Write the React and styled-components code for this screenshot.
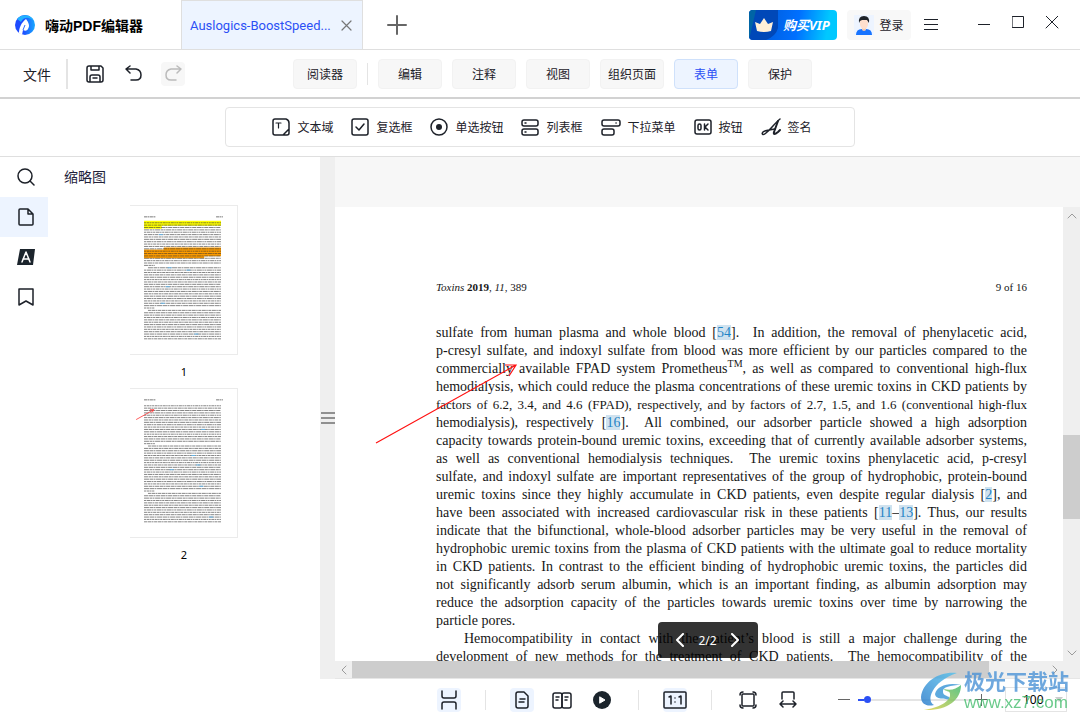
import React, { useState } from 'react'
import styled, { createGlobalStyle, css } from 'styled-components'

const GlobalStyle = createGlobalStyle`
  * {
    box-sizing: border-box;
  }
  body {
    margin: 0;
    background: #fff;
    color: #1d2129;
    font-family: 'Noto Sans', 'Noto Sans CJK SC', sans-serif;
    font-size: 12px;
  }
  button,
  input,
  select {
    font: inherit;
    color: inherit;
  }
  svg {
    display: block;
    flex: none;
  }
`

const AppShell = styled.div`
  display: flex;
  flex-direction: column;
  height: 100vh;
  overflow: hidden;
`

const PlainButton = styled.button`
  display: flex;
  align-items: center;
  justify-content: center;
  padding: 0;
  border: 0;
  background: none;
  white-space: nowrap;
  cursor: pointer;
`

/* title bar */

const TitleBar = styled.header`
  display: flex;
  flex: none;
  align-items: center;
  height: 50px;
  border-bottom: 1px solid #dfdfdf;
`

const Brand = styled.div`
  display: flex;
  align-items: center;
  gap: 10px;
  width: 181px;
  padding-left: 15px;
  color: #000;
  font-family: 'Liberation Sans', 'Noto Sans CJK SC', sans-serif;
  font-size: 14px;
  font-weight: 600;
  white-space: nowrap;
`

const FileTab = styled.div`
  display: flex;
  align-items: center;
  justify-content: space-between;
  align-self: stretch;
  width: 182px;
  padding: 0 10px 0 8px;
  border: 1px solid #dfdfdf;
  border-bottom: 0;
  background: #edf4ff;
  color: #2b50f5;
  font-family: Roboto, sans-serif;
  font-size: 13px;
`

const NewTabButton = styled(PlainButton)`
  width: 68px;
  height: 40px;
`

const TitleActions = styled.div`
  display: flex;
  align-items: center;
  margin-left: auto;
  padding-right: 17px;
`

const VipButton = styled(PlainButton)`
  justify-content: flex-start;
  gap: 4px;
  width: 88px;
  height: 30px;
  margin-right: 10px;
  border-radius: 4px;
  overflow: hidden;
  background: linear-gradient(100deg, #0063e8 30%, #0070ff 55%, #00c8ff 88%);
  color: #fff;
  font-size: 13px;
  font-style: italic;
  font-weight: 700;
`

const LoginButton = styled(PlainButton)`
  gap: 5px;
  width: 64px;
  height: 30px;
  border-radius: 4px;
  background: #f8f8f8;
`

const WindowButton = styled(PlainButton)`
  width: 34px;
  height: 30px;
`

const MenuButton = styled(WindowButton)`
  width: 40px;
  margin-right: 16px;
`

/* main toolbar */

const Toolbar = styled.div`
  display: grid;
  flex: none;
  grid-template-columns: 1fr auto 1fr;
  align-items: center;
  height: 49px;
  padding-left: 25px;
  border-bottom: 2px solid #d2d2d2;
`

const QuickActions = styled.div`
  display: flex;
  align-items: center;
  gap: 15px;
  margin-left: -2px;
`

const IconButton = styled(PlainButton)`
  width: 24px;
  height: 24px;
  border-radius: 4px;
  background: ${props => props.$fill || 'none'};
`

const FileMenu = styled(PlainButton)`
  font-size: 14px;
`

const Divider = styled.span`
  flex: none;
  width: ${props => props.$width || 1}px;
  height: ${props => props.$height}px;
  background: #e4e4e4;
`

const ModeTabs = styled.nav`
  display: flex;
  align-items: center;
  gap: 10px;
`

const ModeTab = styled(PlainButton)`
  width: 64px;
  height: 30px;
  border: 1px solid ${props => (props.$active ? '#cfe1fb' : '#f2f2f2')};
  border-radius: 4px;
  background: ${props => (props.$active ? '#edf4ff' : '#f7f7f7')};
  color: ${props => (props.$active ? '#2b50f5' : '#1d2129')};
`

/* form tools */

const FormBar = styled.div`
  display: flex;
  flex: none;
  justify-content: center;
  padding: 8px 0 9px;
  border-bottom: 1px solid #dfdfdf;
`

const FormTools = styled.div`
  display: flex;
  align-items: center;
  justify-content: center;
  gap: 18px;
  width: 630px;
  height: 40px;
  padding-left: 4px;
  border: 1px solid #e4e4e4;
  border-radius: 4px;
`

const FormTool = styled(PlainButton)`
  gap: 7px;
`

/* workspace */

const Workspace = styled.main`
  display: flex;
  flex: 1;
  min-height: 0;
`

const Rail = styled.nav`
  flex: none;
  width: 48px;
`

const RailButton = styled(PlainButton)`
  width: 100%;
  height: 40px;
  padding-left: 4px;
  background: ${props => (props.$active ? '#edf4ff' : 'none')};
`

const ThumbPanel = styled.aside`
  flex: none;
  width: 272px;
`

const PanelTitle = styled.h2`
  margin: 0;
  padding-left: 16px;
  color: #22223a;
  font-size: 14px;
  font-weight: 400;
  line-height: 40px;
`

const ThumbList = styled.div`
  display: flex;
  flex-direction: column;
  align-items: center;
  padding-top: 8px;
`

const ThumbButton = styled(PlainButton)`
  flex-direction: column;
  color: #000;
  font-size: 11px;
  line-height: 33px;

  svg {
    border: 1px solid #ebebeb;
    border-left: 0;
  }
`

const Splitter = styled.div`
  display: flex;
  flex: none;
  flex-direction: column;
  align-items: center;
  justify-content: center;
  gap: 3px;
  width: 15px;
  background: #efefef;

  i {
    width: 14px;
    height: 2px;
    background: #909090;
  }
`

const Viewer = styled.section`
  position: relative;
  display: grid;
  flex: 1;
  grid-template: 50px 1fr 17px / 1fr 17px;
  min-width: 0;
  border-bottom: 1px solid #e6e6e6;
  background: #efefef;
`

const Gutter = styled.div`
  grid-column: 1 / -1;
  background: #f7f7f7;
`

const Page = styled.article`
  position: relative;
  min-height: 0;
  overflow: hidden;
  padding: 72px 36px 0 101px;
  background: #fff;
  color: #161616;
  font-family: 'Liberation Serif', serif;
`

const PageHeader = styled.header`
  display: flex;
  justify-content: space-between;
  font-size: 11px;
  line-height: 16px;
`

const PageText = styled.div`
  padding-top: 29px;
  font-size: 14px;
  line-height: 18px;
`

const Line = styled.div`
  padding-left: ${props => (props.$indent ? 28 : 0)}px;
  font-size: ${props => (props.$tight ? 13 : 14)}px;
  white-space: nowrap;
  text-align: justify;
  text-align-last: ${props => (props.$end ? 'left' : 'justify')};

  sup {
    font-size: 10px;
    line-height: 0;
  }
`

const Citation = styled.a`
  background: #cfe2ef;
  color: #1f84c6;
  text-decoration: none;
`

const Annotation = styled.svg`
  position: absolute;
  top: 150px;
  left: 36px;
`

const scrollbar = css`
  display: flex;
  align-items: center;
  justify-content: space-between;
  color: #9b9b9b;
`

const VerticalBar = styled.div`
  ${scrollbar}
  flex-direction: column;
`

const HorizontalBar = styled.div`
  ${scrollbar}
`

const ScrollButton = styled(PlainButton)`
  flex: none;
  width: 17px;
  height: 17px;
`

const Track = styled.div`
  display: flex;
  flex: 1;
  flex-direction: ${props => (props.$vertical ? 'column' : 'row')};
  align-self: stretch;

  &::before {
    content: '';
    flex: ${props => props.$before};
  }
  &::after {
    content: '';
    flex: ${props => props.$after};
  }
`

const ScrollThumb = styled.div`
  flex: ${props => props.$size};
  background: #cdcdcd;
`

const Pager = styled.div`
  position: absolute;
  bottom: 20px;
  left: 50%;
  display: flex;
  align-items: center;
  justify-content: center;
  gap: 13px;
  width: 100px;
  height: 36px;
  margin-left: -50px;
  border-radius: 4px;
  background: rgba(0, 0, 0, 0.8);
  color: #fff;
  font-size: 12px;
`

/* status bar */

const StatusBar = styled.footer`
  display: flex;
  flex: none;
  align-items: center;
  justify-content: flex-end;
  height: 41px;
  padding-right: 13px;
`

const ViewButtons = styled.div`
  display: flex;
  align-items: center;
  gap: 16px;
`

const StatusDivider = styled(Divider)`
  margin: 0 24px;
`

const Zoom = styled.div`
  display: flex;
  align-items: center;
  margin-left: 38px;
`

const Slider = styled.input`
  width: 114px;
  height: 16px;
  margin: 0 3px 0 8px;
  appearance: none;
  background: linear-gradient(#2b50f5, #2b50f5) 0 7px / 6px 2px no-repeat,
    linear-gradient(#e4e4e4, #e4e4e4) 0 7px / 100% 2px no-repeat;

  &::-webkit-slider-thumb {
    width: 7px;
    height: 7px;
    appearance: none;
    border-radius: 50%;
    background: #2b50f5;
  }
`

const ZoomField = styled.label`
  position: relative;
  display: flex;
  align-items: center;
  margin-left: 18px;

  svg {
    position: absolute;
    right: 4px;
    pointer-events: none;
  }
`

const ZoomSelect = styled.select`
  width: 62px;
  height: 25px;
  padding: 0 0 0 17px;
  appearance: none;
  border: 1px solid #e4e4e4;
  background: #fff;
  color: #000;
  font-size: 12px;
`

const SiteMark = styled.div`
  position: fixed;
  right: 11px;
  bottom: 7px;
  display: flex;
  align-items: center;
  gap: 2px;
  pointer-events: none;
  opacity: 0.8;
`

const SiteName = styled.div`
  display: flex;
  flex-direction: column;
  color: #4b93d6;
  font-family: 'Liberation Sans', 'Noto Sans CJK SC', sans-serif;
  font-size: 21px;
  font-weight: 700;
  line-height: 22px;

  span {
    color: #45bd6e;
    font-size: 17px;
    font-weight: 400;
    line-height: 20px;
  }
`

function Icon({ size = 18, width = size, stroke = 1.5, children }) {
  return (
    <svg
      width={width}
      height={size}
      viewBox={`0 0 ${width} ${size}`}
      fill="none"
      stroke="currentColor"
      strokeWidth={stroke}
      strokeLinecap="round"
      strokeLinejoin="round"
      aria-hidden="true"
    >
      {children}
    </svg>
  )
}

function Cross({ size, color = '#333' }) {
  return (
    <Icon size={size} stroke={1.2}>
      <path d={`M1 1 ${size - 1} ${size - 1}M${size - 1} 1 1 ${size - 1}`} stroke={color} />
    </Icon>
  )
}

function Logo() {
  return (
    <svg width="20" height="20" viewBox="0 0 20 20" aria-hidden="true">
      <defs>
        <linearGradient id="logo" x1="0" y1="0" x2="1" y2="0">
          <stop offset="0.4" stopColor="#1e4bff" />
          <stop offset="1" stopColor="#18a8ff" />
        </linearGradient>
      </defs>
      <circle cx="10" cy="10" r="10" fill="url(#logo)" />
      <path d="M2 4A10 10 0 0 1 19 6C15 2 9 1 6 7z" fill="#22b2ff" />
      <path d="M11 4c3 4 4 7 2 10-1 2-3 2-5 1l-1 5-3-2c0-5 2-10 7-14z" fill="#fff" />
      <path d="M10 10 8 15" stroke="#2b6cff" strokeWidth="1" />
    </svg>
  )
}

function Crown() {
  return (
    <svg width="30" height="30" viewBox="0 0 30 30" aria-hidden="true">
      <path d="M0 0H29V18Q27 26 17 30H0z" fill="#0048b8" />
      <path d="M0 0H7L0 30z" fill="#0065a5" />
      <path d="M6 12 11 14 15 8 19 14 24 12 22 21Q15 23 8 21z" fill="#fff0d8" />
    </svg>
  )
}

function Avatar() {
  return (
    <svg width="20" height="20" viewBox="0 0 20 20" aria-hidden="true">
      <path fill="#edf4ff" d="M0 0h20v20H0z" />
      <path d="M2 20q0-6 6-6h4q6 0 6 6z" fill="#1874ff" />
      <path d="M8 11h4v4q-2 2-4 0z" fill="#efc8b2" />
      <path d="M6 5h8v5q-1 4-4 4t-4-4z" fill="#ffdfcd" />
      <path d="M5 8Q4 1 10 1q6 0 5 7l-2-3H8L6 6z" fill="#1f2329" />
    </svg>
  )
}

const formTools = [
  {
    label: '文本域',
    icon: (
      <Icon>
        <path d="M11 17H3Q1 17 1 15V3Q1 1 3 1H14Q17 2 17 5V11L11 17H15Q17 17 17 15V11" />
        <path d="M4 5H9M6.500 5V10" strokeWidth="1.200" />
      </Icon>
    )
  },
  {
    label: '复选框',
    icon: (
      <Icon>
        <rect x="1" y="1" width="16" height="16" rx="2" />
        <path d="m5 9 3 3 5-6" />
      </Icon>
    )
  },
  {
    label: '单选按钮',
    icon: (
      <Icon>
        <circle cx="9" cy="9" r="8" />
        <circle cx="9" cy="9" r="3" fill="currentColor" stroke="none" />
      </Icon>
    )
  },
  {
    label: '列表框',
    icon: (
      <Icon>
        <rect x="1" y="2" width="16" height="6" rx="2" />
        <rect x="1" y="11" width="16" height="6" rx="2" />
        <path d="M4 5H5M4 14H5" />
      </Icon>
    )
  },
  {
    label: '下拉菜单',
    icon: (
      <Icon width={20}>
        <rect x="1" y="2" width="18" height="6" rx="2" />
        <rect x="1" y="11" width="12" height="6" rx="2" />
        <path d="M15 5h.1" />
      </Icon>
    )
  },
  {
    label: '按钮',
    icon: (
      <Icon>
        <rect x="1" y="2" width="16" height="14" rx="2" />
        <rect x="4" y="6" width="3" height="6" rx="1.500" />
        <path d="M10.500 6V12M14 6 11 9 14 12" />
      </Icon>
    )
  },
  {
    label: '签名',
    icon: (
      <Icon width={20}>
        <path d="M19 1C14 5 9 12 5 15 2 18 0 16 2 14 4 12 9 12 14 11" />
        <path d="M17 3 13 14Q12 18 17 14L19 12" strokeWidth="2" />
      </Icon>
    )
  }
]

const modes = ['编辑', '注释', '视图', '组织页面', '表单', '保护']

const railItems = [
  {
    label: '搜索',
    icon: (
      <Icon>
        <circle cx="8" cy="8" r="7" />
        <path d="m13 13 4 4" />
      </Icon>
    )
  },
  {
    label: '缩略图',
    icon: (
      <Icon>
        <path d="M11 1H3Q2 1 2 2V16Q2 17 3 17H15Q16 17 16 16V6L11 1V6H16" />
      </Icon>
    )
  },
  {
    label: '注释列表',
    icon: (
      <Icon>
        <path d="M3 1H18L16 17H0z" fill="#1b242c" stroke="none" />
        <path d="M5 14 9 4 13 14M6 11H12" stroke="#fff" />
      </Icon>
    )
  },
  {
    label: '书签',
    icon: (
      <Icon>
        <path d="M2 1H16V17L9 13 2 17z" />
      </Icon>
    )
  }
]

const thumbs = [
  { number: 1, ragged: [18, 36], links: [[15, 5], [24, 19], [43, 20], [22, 27], [17, 34], [51, 47]] },
  { number: 2, arrow: true, ragged: [16, 36], links: [[58, 10], [48, 21], [53, 25], [26, 27], [56, 34], [66, 47]] }
]

const rows = Array.from({ length: 50 }, (_, i) => i)

function Thumbnail({ number, arrow, ragged, links }) {
  const rowY = i => 17 + i * 2.4
  return (
    <ThumbButton>
      <svg width="108" height="150" viewBox="0 0 108 150" aria-hidden="true">
        <path fill="#fff" d="M0 0h108v150H0z" />
        <path d="M14 11h12M87 11h7" stroke="#777" strokeDasharray="3 .5 2 .5" />
        {number === 1 && (
          <>
            <path d="M14 15H92V20H32V23H14z" fill="#ff0" />
            <path d="M34 42H92V51H75V53H14V44H34z" fill="#ff9d00" />
          </>
        )}
        {rows.map(i => (
          <path
            key={i}
            d={`M${ragged.includes(i - 1) ? 18 : 14} ${rowY(i)}H${ragged.includes(i) ? 25 : 92}`}
            stroke="#333"
            strokeOpacity=".6"
            strokeWidth="1"
            strokeDasharray={`${2 + (i % 4)} .6 ${3 + (i % 3)} .5 1.5 .6`}
          />
        ))}
        {links.map(([x, row]) => (
          <path key={row} d={`M${14 + x} ${rowY(row)}h4`} stroke="#65b5e8" />
        ))}
        {arrow && <path d="M6 31 24 21M20 21h4l-2 3" stroke="#f33" fill="none" strokeWidth=".8" />}
      </svg>
      {number}
    </ThumbButton>
  )
}

function Cite({ children }) {
  return <Citation href="#references">{children}</Citation>
}

const lines = [
  <>sulfate from human plasma and whole blood [<Cite>54</Cite>].&nbsp; In addition, the removal of phenylacetic acid,</>,
  'p-cresyl sulfate, and indoxyl sulfate from blood was more efficient by our particles compared to the',
  <>commercially available FPAD system Prometheus<sup>TM</sup>, as well as compared to conventional high-flux</>,
  'hemodialysis, which could reduce the plasma concentrations of these uremic toxins in CKD patients by',
  'factors of 6.2, 3.4, and 4.6 (FPAD), respectively, and by factors of 2.7, 1.5, and 1.6 (conventional high-flux',
  <>hemodialysis), respectively [<Cite>16</Cite>].&nbsp; All combined, our adsorber particle showed a high adsorption</>,
  'capacity towards protein-bound uremic toxins, exceeding that of currently available adsorber systems,',
  <>as well as conventional hemodialysis techniques.&nbsp; The uremic toxins phenylacetic acid, p-cresyl</>,
  'sulfate, and indoxyl sulfate are important representatives of the group of hydrophobic, protein-bound',
  <>uremic toxins since they highly accumulate in CKD patients, even despite regular dialysis [<Cite>2</Cite>], and</>,
  <>have been associated with increased cardiovascular risk in these patients [<Cite>11</Cite>–<Cite>13</Cite>]. Thus, our results</>,
  'indicate that the bifunctional, whole-blood adsorber particles may be very useful in the removal of',
  'hydrophobic uremic toxins from the plasma of CKD patients with the ultimate goal to reduce mortality',
  'in CKD patients. In contrast to the efficient binding of hydrophobic uremic toxins, the particles did',
  'not significantly adsorb serum albumin, which is an important finding, as albumin adsorption may',
  'reduce the adsorption capacity of the particles towards uremic toxins over time by narrowing the',
  'particle pores.',
  'Hemocompatibility in contact with the patient’s blood is still a major challenge during the',
  <>development of new methods for the treatment of CKD patients.&nbsp; The hemocompatibility of the</>
]

function TopBar() {
  return (
    <TitleBar>
      <Brand>
        <Logo />
        嗨动PDF编辑器
      </Brand>
      <FileTab>
        Auslogics-BoostSpeed...
        <PlainButton aria-label="关闭标签">
          <Cross size={11} color="#777" />
        </PlainButton>
      </FileTab>
      <NewTabButton aria-label="新建标签">
        <Icon size={20} stroke={2}>
          <path d="M10 1V19M1 10H19" stroke="#666" />
        </Icon>
      </NewTabButton>
      <TitleActions>
        <VipButton>
          <Crown />
          购买VIP
        </VipButton>
        <LoginButton>
          <Avatar />
          登录
        </LoginButton>
        <MenuButton aria-label="菜单">
          <Icon size={14} stroke={1}>
            <path d="M0 1.500H14M0 6.500H14M0 11.500H14" />
          </Icon>
        </MenuButton>
        <WindowButton aria-label="最小化">
          <Icon size={12} stroke={1}>
            <path d="M0 5.500H12" />
          </Icon>
        </WindowButton>
        <WindowButton aria-label="最大化">
          <Icon size={18} width={12} stroke={1}>
            <path d="M.5.500H11.500V11.500H.5z" />
          </Icon>
        </WindowButton>
        <PlainButton aria-label="关闭">
          <Icon size={18} width={28} stroke={1}>
            <path d="M11 0 23 12M23 0 11 12" />
          </Icon>
        </PlainButton>
      </TitleActions>
    </TitleBar>
  )
}

function MainToolbar({ mode, onModeChange }) {
  return (
    <Toolbar>
      <QuickActions>
        <FileMenu>文件</FileMenu>
        <Divider $width={2} $height={30} />
        <IconButton aria-label="保存">
          <Icon>
            <path d="M3 1H15L17 3V15Q17 17 15 17H3Q1 17 1 15V3Q1 1 3 1zM5 1V5H13V1M4 17V12Q4 10 6 10H12Q14 10 14 12V17M7 13H11" />
          </Icon>
        </IconButton>
        <IconButton aria-label="撤销">
          <Icon>
            <path d="M5 1 1 4 5 8M1 4H11Q16 5 16 10 16 15 11 15H6" />
          </Icon>
        </IconButton>
        <IconButton aria-label="重做" $fill="#f7f7f7" disabled>
          <Icon>
            <path d="M13 1 17 4 13 8M17 4H7Q2 5 2 10 2 15 7 15H12" stroke="#bbb" />
          </Icon>
        </IconButton>
      </QuickActions>
      <ModeTabs>
        <ModeTab>阅读器</ModeTab>
        <Divider $height={22} />
        {modes.map(name => (
          <ModeTab key={name} $active={name === mode} onClick={() => onModeChange(name)}>
            {name}
          </ModeTab>
        ))}
      </ModeTabs>
    </Toolbar>
  )
}

function DocumentView() {
  return (
    <Viewer>
      <Gutter />
      <Page>
        <PageHeader>
          <span>
            <em>Toxins</em> <b>2019</b>, <em>11</em>, 389
          </span>
          <span>9 of 16</span>
        </PageHeader>
        <PageText>
          {lines.map((line, index) => (
            <Line key={index} $indent={index === 17} $end={index === 16} $tight={index === 4}>
              {line}
            </Line>
          ))}
        </PageText>
        <Annotation width="150" height="90" viewBox="0 0 150 90" fill="none" stroke="#f11" strokeWidth="1.2">
          <path d="M5 86 145 8M134 8 145 8 138 19" />
        </Annotation>
      </Page>
      <VerticalBar>
        <ScrollButton aria-label="向上">
          <Icon size={10} stroke={1}>
            <path d="M1 7 5 3 9 7" />
          </Icon>
        </ScrollButton>
        <Track $vertical $before={211} $after={125}>
          <ScrollThumb $size={84} />
        </Track>
        <ScrollButton aria-label="向下">
          <Icon size={10} stroke={1}>
            <path d="M1 3 5 7 9 3" />
          </Icon>
        </ScrollButton>
      </VerticalBar>
      <HorizontalBar>
        <ScrollButton aria-label="向左">
          <Icon size={10} stroke={1}>
            <path d="M7 1 3 5 7 9" />
          </Icon>
        </ScrollButton>
        <Track $before={0} $after={57}>
          <ScrollThumb $size={637} />
        </Track>
        <ScrollButton aria-label="向右">
          <Icon size={10} stroke={1}>
            <path d="M3 1 7 5 3 9" />
          </Icon>
        </ScrollButton>
      </HorizontalBar>
      <Pager>
        <PlainButton aria-label="上一页">
          <Icon size={14} width={10} stroke={2}>
            <path d="M8 1 2 7 8 13" />
          </Icon>
        </PlainButton>
        2/2
        <PlainButton aria-label="下一页">
          <Icon size={14} width={10} stroke={2}>
            <path d="M2 1 8 7 2 13" />
          </Icon>
        </PlainButton>
      </Pager>
    </Viewer>
  )
}

function Status() {
  const [zoom, setZoom] = useState(6)
  return (
    <StatusBar>
      <ViewButtons>
        <IconButton aria-label="连续滚动" $fill="#edf4ff">
          <Icon size={20} width={16}>
            <path d="M1 1V6Q1 8 3 8H13Q15 8 15 6V1M1 19V14Q1 12 3 12H13Q15 12 15 14V19" />
          </Icon>
        </IconButton>
      </ViewButtons>
      <StatusDivider $height={20} />
      <ViewButtons>
        <IconButton aria-label="单页" $fill="#edf4ff">
          <Icon width={14}>
            <path d="M3 1H9L13 5V15Q13 17 11 17H3Q1 17 1 15V3Q1 1 3 1zM5 8H10M4 11H9" />
          </Icon>
        </IconButton>
        <IconButton aria-label="双页">
          <Icon width={20}>
            <rect x="1" y="2" width="9" height="15" rx="2" />
            <rect x="10" y="2" width="9" height="15" rx="2" />
            <path d="M4 6H7M4 9H6M13 6H16M13 9H15" />
          </Icon>
        </IconButton>
        <IconButton aria-label="播放">
          <Icon>
            <circle cx="9" cy="9" r="9" fill="#1b242c" stroke="none" />
            <path d="M7 6 12 9 7 12z" fill="#fff" stroke="#fff" strokeWidth="1" />
          </Icon>
        </IconButton>
      </ViewButtons>
      <StatusDivider $height={20} />
      <IconButton aria-label="实际大小" $fill="#edf4ff">
        <Icon width={24}>
          <rect x="1" y="1" width="22" height="16" rx="1" />
          <path d="M6 6 8 5V13M16 6 18 5V13M12 7V7.100M12 11V11.100" />
        </Icon>
      </IconButton>
      <StatusDivider $height={20} />
      <ViewButtons>
        <IconButton aria-label="适合页面">
          <Icon>
            <rect x="3" y="3" width="12" height="12" rx="1" />
            <path d="M1 4Q1 1 4 1M14 1Q17 1 17 4M17 14Q17 17 14 17M4 17Q1 17 1 14" />
          </Icon>
        </IconButton>
        <IconButton aria-label="适合宽度">
          <Icon>
            <path d="M3 8V2Q3 1 4 1H14Q15 1 15 2V8M1 13H17M4 10 1 13 4 16M14 10 17 13 14 16" />
          </Icon>
        </IconButton>
      </ViewButtons>
      <Zoom>
        <PlainButton aria-label="缩小">
          <Icon size={12} stroke={1}>
            <path d="M0 5.500H12" stroke="#666" />
          </Icon>
        </PlainButton>
        <Slider
          type="range"
          aria-label="缩放"
          value={zoom}
          onChange={event => setZoom(Number(event.target.value))}
        />
        <PlainButton aria-label="放大">
          <Icon size={12} stroke={1}>
            <path d="M0 5.500H12M6.500 0V12" stroke="#666" />
          </Icon>
        </PlainButton>
        <ZoomField>
          <ZoomSelect aria-label="缩放比例" defaultValue="100">
            <option>50</option>
            <option>100</option>
            <option>200</option>
          </ZoomSelect>
          <svg width="8" height="5" viewBox="0 0 8 5">
            <path d="M0 0H8L4 5z" fill="#ccc" />
          </svg>
        </ZoomField>
      </Zoom>
    </StatusBar>
  )
}

function DownloadMark() {
  return (
    <SiteMark>
      <svg width="42" height="42" viewBox="0 0 42 42" aria-hidden="true">
        <defs>
          <linearGradient id="swirl" x1="0" y1="1" x2="1" y2="0">
            <stop offset="0" stopColor="#2276c9" />
            <stop offset="1" stopColor="#55c3ee" />
          </linearGradient>
          <linearGradient id="leaf" x1="0" y1="1" x2="1" y2="0">
            <stop offset="0" stopColor="#e2cf3e" />
            <stop offset="1" stopColor="#35b76a" />
          </linearGradient>
        </defs>
        <path d="M37 2C20 0 3 10 1 26c0 7 6 10 13 8C6 30 11 11 37 2z" fill="url(#swirl)" />
        <path d="M15 23c2-8 13-12 26-9-10 0-19 2-18 7 0 5 9 3 7 9-2-4-14 0-15-7z" fill="#3594d6" />
        <path d="M41 14c0 15-14 26-37 25 13-2 27-8 26-16 0-4-5-2-6-5 7 2 12 0 17-4z" fill="url(#leaf)" />
      </svg>
      <SiteName>
        极光下载站
        <span>www.xz7.com</span>
      </SiteName>
    </SiteMark>
  )
}

export default function App() {
  const [mode, setMode] = useState('表单')

  return (
    <AppShell>
      <GlobalStyle />
      <TopBar />
      <MainToolbar mode={mode} onModeChange={setMode} />
      <FormBar>
        <FormTools>
          {formTools.map(({ label, icon }) => (
            <FormTool key={label}>
              {icon}
              {label}
            </FormTool>
          ))}
        </FormTools>
      </FormBar>
      <Workspace>
        <Rail>
          {railItems.map(({ label, icon }) => (
            <RailButton key={label} aria-label={label} $active={label === '缩略图'}>
              {icon}
            </RailButton>
          ))}
        </Rail>
        <ThumbPanel>
          <PanelTitle>缩略图</PanelTitle>
          <ThumbList>
            {thumbs.map(thumb => (
              <Thumbnail key={thumb.number} {...thumb} />
            ))}
          </ThumbList>
        </ThumbPanel>
        <Splitter>
          <i />
          <i />
          <i />
        </Splitter>
        <DocumentView />
      </Workspace>
      <Status />
      <DownloadMark />
    </AppShell>
  )
}
